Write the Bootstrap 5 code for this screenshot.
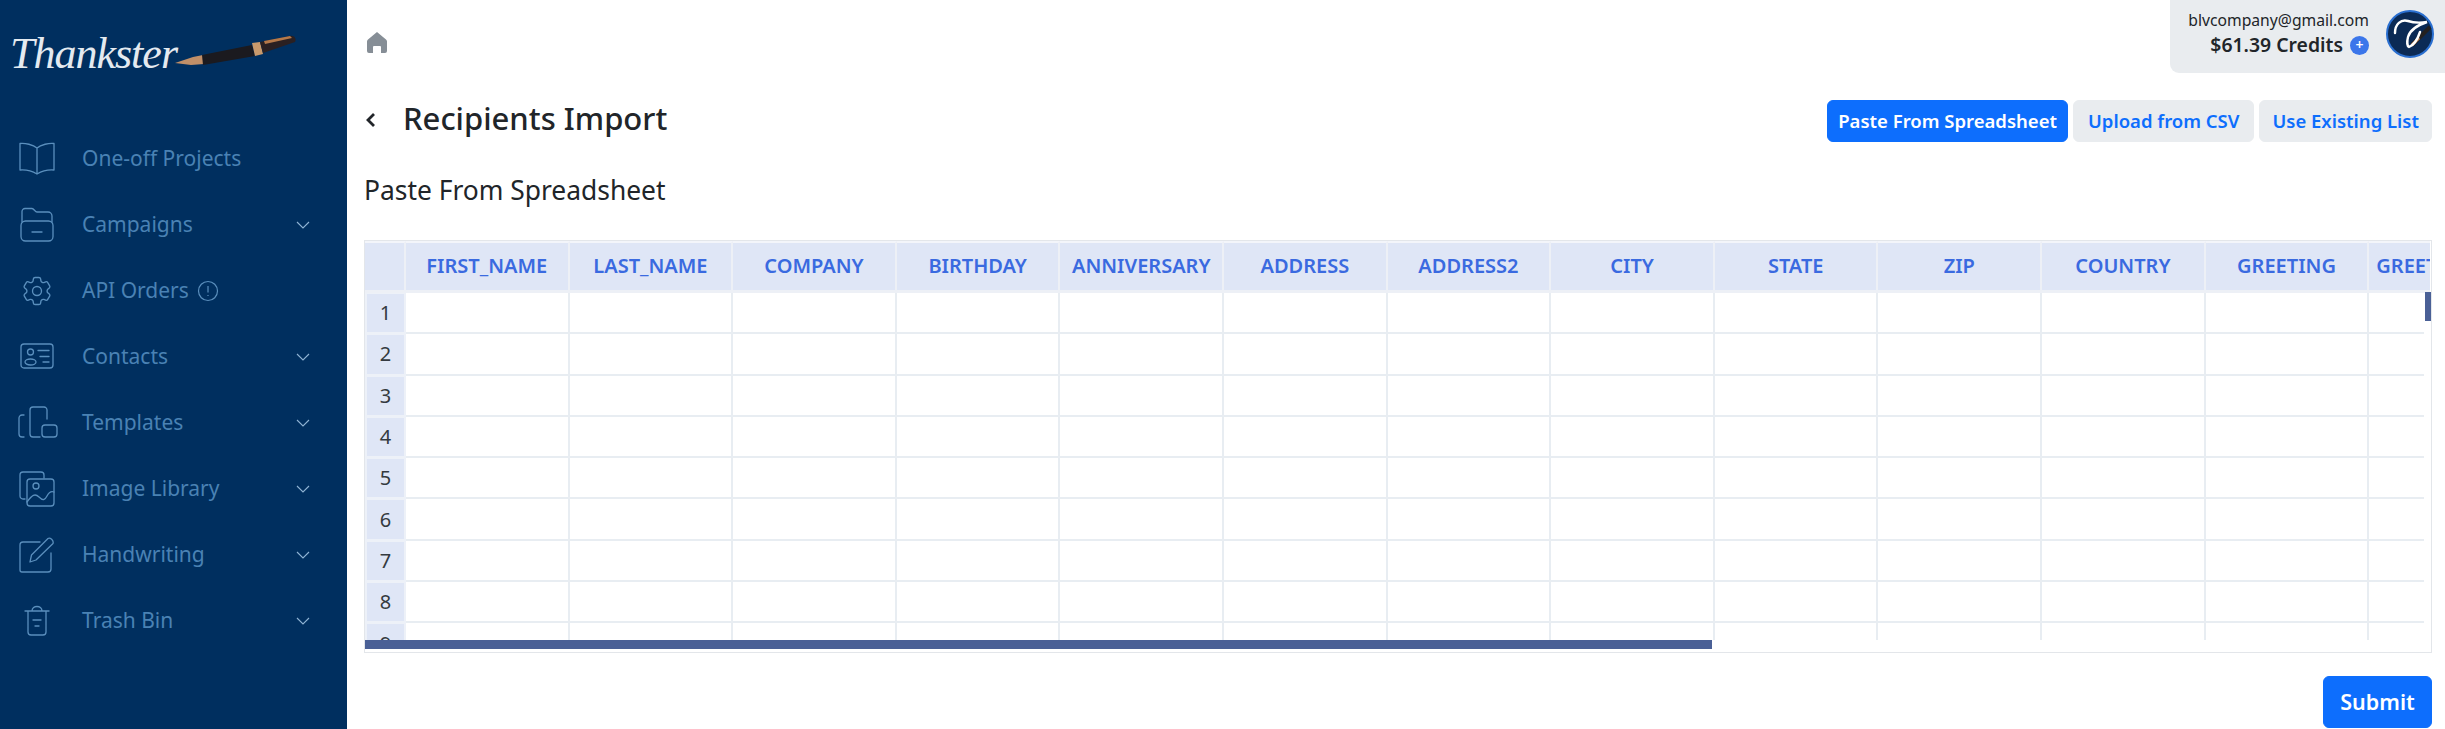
<!DOCTYPE html>
<html lang="en">
  <head>
    <meta charset="UTF-8" />
    <title>Recipients Import</title>
    <link rel="stylesheet" href="https://cdn.jsdelivr.net/npm/bootstrap@5.3.2/dist/css/bootstrap.min.css" />
    <style>
      body {
        font-family: "Noto Sans", sans-serif;
        height: 729px;
        overflow: hidden;
        color: #212529;
      }

      /* Sidebar */
      .side-bar {
        width: 347px;
        height: 729px;
        background: #002f5f;
        flex-shrink: 0;
      }
      .logo-box {
        height: 126px;
        padding: 26px 0 0 10px;
        color: #e4eaf0;
      }
      .logo-text {
        font-family: "Liberation Serif", serif;
        font-style: italic;
        font-size: 44px;
        line-height: 56px;
        letter-spacing: -1px;
        width: 162px;
      }
      .side-item {
        height: 66px;
        padding: 0 37px 0 19px;
        color: #4a82b4;
        font-size: 21px;
        text-decoration: none;
      }
      .side-item:hover { color: #4a82b4; }
      .side-icon {
        width: 36px;
        height: 36px;
        margin-right: 27px;
        fill: none;
        stroke: #5a8fbd;
        stroke-width: 1.3;
        stroke-linecap: round;
        stroke-linejoin: round;
        flex-shrink: 0;
      }
      .side-chev {
        width: 14px;
        height: 8px;
        fill: none;
        stroke: #8fb4d4;
        stroke-width: 1.1;
      }

      /* Top bar */
      .main-box { width: 2098px; min-width: 0; }
      .top-bar { height: 73px; }
      .home-ico { width: 20px; height: 21px; fill: #868e96; margin: 32px 0 0 20px; }
      .acct-box {
        width: 275px;
        height: 73px;
        background: #e9ecef;
        border-bottom-left-radius: 9px;
        padding: 10px 11px 0 0;
      }
      .acct-mail { font-size: 15.7px; line-height: 20px; }
      .acct-credit { font-size: 19.4px; line-height: 26px; font-weight: 600; margin-top: 2px; }
      .plus-dot {
        width: 19px;
        height: 19px;
        border-radius: 50%;
        background: #3b76ea;
        color: #fff;
        font-size: 14px;
        line-height: 18px;
        text-align: center;
        margin-left: 7px;
      }
      .acct-pic { width: 48px; height: 48px; margin-left: 17px; }

      /* Page body */
      .page-box { padding: 27px 13px 0 17px; }
      .title-row { height: 42px; }
      .back-ico { width: 9px; height: 14px; fill: none; stroke: #212529; stroke-width: 2.8; margin: 0 28px 3px 2px; }
      .page-title { font-size: 31px; line-height: 37px; font-weight: 500; margin: 0; padding-bottom: 5px; }
      .tab-btn {
        height: 42px;
        font-size: 18.5px;
        font-weight: 600;
        padding: 0 12px;
        line-height: 40px;
        margin-left: 5px;
        white-space: nowrap;
      }
      .tab-tight { padding: 0 10px; }
      .tab-wide { padding: 0 14px; }
      .tab-off { background: #e9ecef; color: #0d6efd; border-color: #e9ecef; }
      .sub-title { font-size: 26.4px; line-height: 36px; font-weight: 400; margin: 30px 0 32px; }

      /* Spreadsheet */
      .sheet-box {
        height: 413px;
        border: 1px solid #e3e6ea;
        position: relative;
        overflow: hidden;
      }
      .sheet-head { overflow: hidden; height: 52px; margin-right: 1px; }
      .sheet-rows { overflow: hidden; height: 347px; margin-right: 7px; }
      .sheet-grid {
        table-layout: fixed;
        width: 2168px;
        border-collapse: separate;
        border-spacing: 0;
      }
      .sheet-grid th {
        background: #dfe6f6;
        color: #3a6ae0;
        font-size: 20px;
        font-weight: 600;
        text-align: center;
        height: 52px;
        white-space: nowrap;
        overflow: hidden;
        padding: 0 0 1px;
        border-top: 2px solid #f3f5fa;
        border-right: 2px solid #edf0f6;
        border-bottom: 3px solid #edf0f6;
      }
      .sheet-grid th.sheet-last { text-align: left; padding-left: 7px; }
      .sheet-grid td {
        height: 41.3px;
        padding: 0;
        border-right: 2px solid #e8edf2;
        border-bottom: 2px solid #e8edf2;
      }
      .sheet-grid td.row-no {
        background: #dfe6f6;
        color: #343a40;
        font-size: 20px;
        text-align: center;
        border: 2px solid #edf1f8;
        border-width: 1px 2px 2px 2px;
        vertical-align: middle;
      }
      .bar-x { position: absolute; left: 0; top: 399px; height: 9px; width: 1347px; background: #4a6096; }
      .bar-y { position: absolute; right: 0; top: 51px; height: 29px; width: 6px; background: #4a6096; }
      .submit-btn { width: 109px; height: 52px; font-size: 21.5px; font-weight: 600; margin-top: 23px; padding: 0; }
    </style>
  </head>
  <body>
    <div class="d-flex">
      <nav class="side-bar">
        <div class="logo-box d-flex align-items-start">
          <span class="logo-text">Thankster</span>
          <svg width="126" height="40" viewBox="0 0 126 40" style="margin:6px 0 0 0">
            <path d="M3 31l18-6 10-2 1 9-13 1z" fill="#c08f68"/>
            <path d="M30 23l50-10 3 11-52 9z" fill="#1b1a1f"/>
            <path d="M80 11l8-1 3 12-8 2z" fill="#c99a6c"/>
            <path d="M88 10l30-6c4-1 7 3 5 6l-32 11z" fill="#2a2022"/>
            <path d="M92 9l26-5 2 2-27 6z" fill="#b5794a"/>
          </svg>
        </div>
        <a href="#" class="side-item d-flex align-items-center">
          <svg class="side-icon" viewBox="0 0 36 36"><path d="M18 7C14 3.500 6 2 1 2.500V29c6-.5 12 1 17 4 5-3 11-4.500 17-4V2.500C30 2 22 3.500 18 7zM18 7v26"/></svg>
          <span>One-off Projects</span>
        </a>
        <a href="#" class="side-item d-flex align-items-center">
          <svg class="side-icon" viewBox="0 0 36 36"><path d="M3 15V4.500A3 3 0 0 1 6 1.500h7c2 0 3 3.500 5 3.500h11a4 4 0 0 1 4 4v6"/><rect x="2" y="14" width="32" height="20" rx="4.500"/><path d="M13 25h10"/></svg>
          <span>Campaigns</span>
          <svg class="side-chev ms-auto" viewBox="0 0 14 8"><path d="M1 1l6 6 6-6"/></svg>
        </a>
        <a href="#" class="side-item d-flex align-items-center">
          <svg class="side-icon" viewBox="0 0 24 24"><path d="M9.594 3.940c.09-.542.56-.94 1.110-.94h2.593c.55 0 1.020.398 1.110.94l.213 1.281c.063.374.313.686.645.87.074.04.147.083.22.127.324.196.72.257 1.075.124l1.217-.456a1.125 1.125 0 0 1 1.370.49l1.296 2.247a1.125 1.125 0 0 1-.26 1.431l-1.003.827c-.293.24-.438.613-.431.992a6.759 6.759 0 0 1 0 .255c-.007.378.138.75.43.99l1.005.828c.424.35.534.954.26 1.430l-1.298 2.247a1.125 1.125 0 0 1-1.369.491l-1.217-.456c-.355-.133-.75-.072-1.076.124a6.570 6.570 0 0 1-.22.128c-.331.183-.581.495-.644.869l-.213 1.280c-.09.543-.56.941-1.110.941h-2.594c-.55 0-1.020-.398-1.110-.94l-.213-1.281c-.062-.374-.312-.686-.644-.87a6.520 6.520 0 0 1-.22-.127c-.325-.196-.72-.257-1.076-.124l-1.217.456a1.125 1.125 0 0 1-1.369-.49l-1.297-2.247a1.125 1.125 0 0 1 .26-1.431l1.004-.827c.292-.24.437-.613.43-.992a6.932 6.932 0 0 1 0-.255c.007-.378-.138-.75-.43-.99l-1.004-.828a1.125 1.125 0 0 1-.26-1.430l1.297-2.247a1.125 1.125 0 0 1 1.370-.491l1.216.456c.356.133.751.072 1.076-.124.072-.044.146-.087.22-.128.332-.183.582-.495.644-.869l.214-1.281z" stroke-width="0.9"/><circle cx="12" cy="12" r="3" stroke-width="0.9"/></svg>
          <span>API Orders</span>
          <svg class="ms-2" width="22" height="22" viewBox="0 0 22 22" fill="none" stroke="#5a8fbd" stroke-width="1.200"><circle cx="11" cy="11" r="9.500"/><path d="M11 6v6.500M11 15v1"/></svg>
        </a>
        <a href="#" class="side-item d-flex align-items-center">
          <svg class="side-icon" viewBox="0 0 36 36"><rect x="2" y="5" width="32" height="24" rx="3"/><circle cx="11.500" cy="13" r="3"/><ellipse cx="11.500" cy="23" rx="5.500" ry="3"/><path d="M19 11.500h11M21 17.500h9M24 23h6"/></svg>
          <span>Contacts</span>
          <svg class="side-chev ms-auto" viewBox="0 0 14 8"><path d="M1 1l6 6 6-6"/></svg>
        </a>
        <a href="#" class="side-item d-flex align-items-center">
          <svg class="side-icon" viewBox="0 0 36 36" style="overflow:visible"><path d="M5 10H3a3 3 0 0 0-3 3v16a3 3 0 0 0 3 3h2"/><path d="M28 14V5a3 3 0 0 0-3-3H14a3 3 0 0 0-3 3v24a3 3 0 0 0 3 3h7"/><rect x="23" y="20" width="15" height="12" rx="3"/></svg>
          <span>Templates</span>
          <svg class="side-chev ms-auto" viewBox="0 0 14 8"><path d="M1 1l6 6 6-6"/></svg>
        </a>
        <a href="#" class="side-item d-flex align-items-center">
          <svg class="side-icon" viewBox="0 0 36 36"><path d="M6 28H4a3 3 0 0 1-3-3V4a3 3 0 0 1 3-3h18a3 3 0 0 1 3 3v3"/><rect x="8" y="8" width="27" height="27" rx="3"/><circle cx="17" cy="15" r="3"/><path d="M8 31c5-7 8-9 12-5s6 3 8-1 4-5 7-4"/></svg>
          <span>Image Library</span>
          <svg class="side-chev ms-auto" viewBox="0 0 14 8"><path d="M1 1l6 6 6-6"/></svg>
        </a>
        <a href="#" class="side-item d-flex align-items-center">
          <svg class="side-icon" viewBox="0 0 36 36"><path d="M21 5H4a3 3 0 0 0-3 3v25a2 2 0 0 0 2 2h26a3 3 0 0 0 3-3V16"/><path d="M11 25l1.500-7L29 1.500c2-1.500 6 2 5 5L17 23z"/></svg>
          <span>Handwriting</span>
          <svg class="side-chev ms-auto" viewBox="0 0 14 8"><path d="M1 1l6 6 6-6"/></svg>
        </a>
        <a href="#" class="side-item d-flex align-items-center">
          <svg class="side-icon" viewBox="0 0 36 36"><path d="M6 8h24M13 8c0-6 10-6 10 0M9 8v21a3 3 0 0 0 3 3h12a3 3 0 0 0 3-3V8M14 17h8M16 23h4"/></svg>
          <span>Trash Bin</span>
          <svg class="side-chev ms-auto" viewBox="0 0 14 8"><path d="M1 1l6 6 6-6"/></svg>
        </a>
      </nav>

      <main class="main-box">
        <div class="top-bar d-flex justify-content-between align-items-start">
          <svg class="home-ico" viewBox="0 0 20 21"><path d="M10 0L1 7.500C.3 8 0 8.800 0 9.500V19a2 2 0 0 0 2 2h4v-6a1 1 0 0 1 1-1h6a1 1 0 0 1 1 1v6h4a2 2 0 0 0 2-2V9.500c0-.7-.3-1.500-1-2z"/></svg>
          <div class="acct-box d-flex justify-content-end align-items-start">
            <div class="text-end">
              <div class="acct-mail">blvcompany@gmail.com</div>
              <div class="acct-credit d-flex align-items-center justify-content-end">$61.39 Credits<span class="plus-dot">+</span></div>
            </div>
            <svg class="acct-pic" viewBox="0 0 48 48">
              <circle cx="24" cy="24" r="23" fill="#0b2a55" stroke="#2a6fd0" stroke-width="2"/>
              <path d="M44 17L26 35" stroke="#23201f" stroke-width="4"/>
              <path d="M33 28L26 35" stroke="#c58a5a" stroke-width="3"/>
              <path d="M9 23C9 14 15 9 22 11c6 2 12 2 19 1-9 3-17 8-19 15-1 4-1 9 1 10 5-2 9-9 11-15" fill="none" stroke="#fff" stroke-width="2.400" stroke-linecap="round"/>
            </svg>
          </div>
        </div>

        <div class="page-box">
          <div class="title-row d-flex align-items-center">
            <svg class="back-ico" viewBox="0 0 9 14"><path d="M8 1L2 7l6 6"/></svg>
            <h1 class="page-title flex-grow-1">Recipients Import</h1>
            <a href="#" class="btn btn-primary tab-btn tab-tight">Paste From Spreadsheet</a>
            <a href="#" class="btn tab-btn tab-wide tab-off">Upload from CSV</a>
            <a href="#" class="btn tab-btn tab-off">Use Existing List</a>
          </div>
          <h2 class="sub-title">Paste From Spreadsheet</h2>

          <div class="sheet-box">
            <div class="sheet-head"><table class="sheet-grid" id="headGrid"></table></div>
            <div class="sheet-rows"><table class="sheet-grid" id="rowGrid"></table></div>
            <div class="bar-x"></div>
            <div class="bar-y"></div>
          </div>

          <div class="text-end">
            <button type="button" class="btn btn-primary submit-btn">Submit</button>
          </div>
        </div>
      </main>
    </div>

    <script src="https://cdn.jsdelivr.net/npm/bootstrap@5.3.2/dist/js/bootstrap.bundle.min.js"></script>
    <script>
      let columns = ["FIRST_NAME", "LAST_NAME", "COMPANY", "BIRTHDAY", "ANNIVERSARY", "ADDRESS", "ADDRESS2", "CITY", "STATE", "ZIP", "COUNTRY", "GREETING", "GREETING"];

      let colgroup = `<colgroup><col style="width:41px">${columns.map(() => `<col style="width:163.6px">`).join("")}</colgroup>`;

      document.querySelector("#headGrid").innerHTML =
        `${colgroup}<tr><th></th>${columns.map((c, i) => `<th class="${i === 12 ? "sheet-last" : ""}">${c}</th>`).join("")}</tr>`;

      let rows = "";
      for (let i = 1; i <= 9; i++) {
        rows += `<tr><td class="row-no">${i}</td>${columns.map(() => "<td></td>").join("")}</tr>`;
      }
      document.querySelector("#rowGrid").innerHTML = colgroup + rows;
    </script>
  </body>
</html>
